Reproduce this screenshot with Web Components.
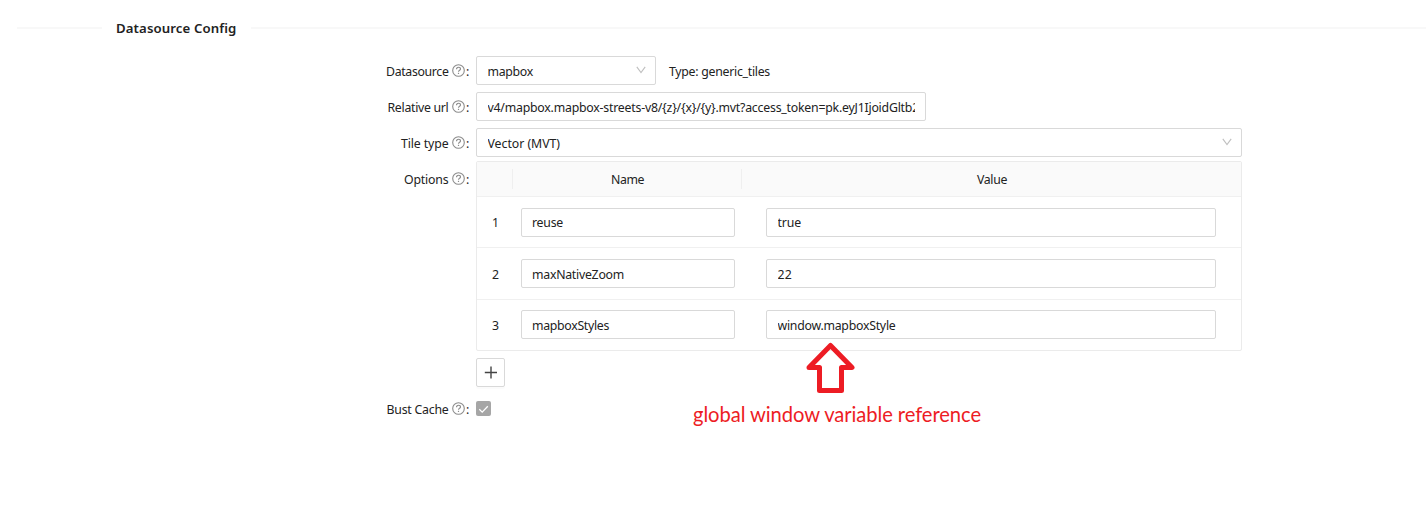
<!DOCTYPE html>
<html lang="en">
<head>
<meta charset="utf-8">
<title>Datasource Config</title>
<style>
html,body{margin:0;background:#fff}
body{height:520px;overflow:hidden;font:12.3px/20px "Noto Sans","Open Sans",sans-serif;color:#222}
</style>
</head>
<body>
<datasource-page></datasource-page>
<script>
const define = (name, css, html, init) => {
  const tpl = document.createElement('template');
  tpl.innerHTML = `<style>*{box-sizing:border-box}${css}</style>${html}`;
  customElements.define(name, class extends HTMLElement {
    connectedCallback() {
      if (this.shadowRoot) return;
      this.attachShadow({mode: 'open'}).append(tpl.content.cloneNode(true));
      if (init) init.call(this, this.shadowRoot);
    }
  });
};

/* Single-line text tracked to an exact advance width (attribute w). */
define('fit-text', ':host{display:inline-block;white-space:pre}span{display:inline-block}', '<span><slot></slot></span>', function (root) {
  const s = root.querySelector('span');
  const w = parseFloat(this.getAttribute('w'));
  const n = this.textContent.length;
  this.style.width = w + 'px';
  s.style.letterSpacing = (w - s.getBoundingClientRect().width) / n + 'px';
});

define('help-icon', ':host{display:block;width:13px;height:13px}svg{display:block}',
  `<svg width="13" height="13" viewBox="0 0 13 13" fill="none" stroke="#8c8c8c"><circle cx="6.5" cy="6.5" r="5.8" stroke-width="1.1"/><path d="M4.5 5.3C4.5 3.9 5.4 3.2 6.5 3.2S8.5 4 8.5 5C8.5 6.3 6.5 6.2 6.5 7.8" stroke-width="1.15"/><path d="M6.5 8.8V10" stroke-width="1.2"/></svg>`);

define('chevron-icon', ':host{display:block;width:10px;height:8px}svg{display:block}',
  `<svg width="10" height="8" viewBox="0 0 10 8" fill="none" stroke="#bfbfbf"><path d="M.8 .8L5 6.5L9.2 .8" stroke-width="1.1"/></svg>`);

define('section-title', `:host{display:flex;align-items:center;height:56px;padding-left:17px;font-weight:600;font-size:13.2px}
  i{height:2px;background:#f8f8f8}.a{width:85px;margin-right:14px}.b{flex:1;margin-left:14px}`,
  '<i class="a"></i><slot></slot><i class="b"></i>');

define('form-row', `:host{display:grid;grid-template-columns:470px 1fr;column-gap:6px;align-items:start}
  .l{display:flex;justify-content:flex-end;align-items:center;height:29px;margin-top:var(--label-offset,0)}
  ::slotted([slot=label]){margin-top:2px}
  help-icon{margin-left:3.5px}b{font-weight:400;width:4px;margin:2px 0 0 1px}.c{display:flex;align-items:center}`,
  '<div class="l"><slot name="label"></slot><help-icon></help-icon><b>:</b></div><div class="c"><slot></slot></div>');

define('text-box', `:host{display:flex;align-items:center;height:29px;border:1px solid #d9d9d9;border-radius:2px;background:#fff;padding:2px 10px 0 10.5px}
  .t{flex:1;min-width:0;overflow:hidden;display:flex}chevron-icon{display:none;flex:none;margin:-3px -1px 0 0}
  :host([select]) chevron-icon{display:block}`,
  '<div class="t"><slot></slot></div><chevron-icon></chevron-icon>');

define('option-row', `:host{display:grid;grid-template-columns:36px 214px 31px 450px;height:51px;align-items:center;border-top:1px solid #f0f0f0}
  :host([index="2"]){height:52px;padding-bottom:1px}
  :host([index="3"]){padding-bottom:1px}
  .n{text-align:center;padding:2px 0 0 1px}
  :host([index="2"]) .n{padding-top:3px}
  :host([index="2"]) ::slotted(*){padding-top:3px}
  ::slotted([slot=name]){margin-left:8px;width:214px;padding-left:10px}::slotted([slot=value]){grid-column:4;margin-left:8px;width:450px}`,
  '<div class="n"></div><slot name="name"></slot><slot name="value"></slot>', function (root) {
    root.querySelector('.n').textContent = this.getAttribute('index');
  });

define('options-table', `:host{display:block;width:766px;height:190px;border:1px solid #ebebeb;border-radius:2px}
  .h{display:grid;grid-template-columns:36px 229px 1fr;height:34px;background:#fafafa;align-items:center;text-align:center}
  .h div{height:20px;border-right:1px solid #efefef;padding:1px 0 0 1px}.h div:last-child{border:0}`,
  `<div class="h"><div></div><div><fit-text w="33">Name</fit-text></div><div><fit-text w="30">Value</fit-text></div></div><slot></slot>`);

define('add-button', ':host{display:flex;align-items:center;justify-content:center;width:29px;height:29px;border:1px solid #d9d9d9;border-radius:2px;box-shadow:0 2px 0 rgba(0,0,0,.016)}svg{display:block}',
  '<svg width="13" height="13" viewBox="0 0 13 13" stroke="#444" stroke-width="1.4"><path d="M7 .5V12.5M.8 6.5H13"/></svg>');

define('check-box', ':host{display:block;width:15px;height:15px;border-radius:2px;background:#a6a6a6}svg{display:block}',
  '<svg width="15" height="15" viewBox="0 0 15 15" fill="none" stroke="#fff" stroke-width="1.3"><path d="M3.3 8.3L6.2 11.1L11.8 5.2"/></svg>');

/* Callout drawn over the form: arrow pointing at the value, with its caption. */
define('red-callout', `:host{position:absolute;left:693px;top:342px;width:288px;color:#ed1c24;font:20.2px/26px Lato,sans-serif}
  svg{display:block;margin-left:112px}fit-text{margin-top:6px}`,
  `<svg width="51" height="53" viewBox="0 0 51 53" fill="none" stroke="#ed1c24" stroke-width="5" stroke-linejoin="round"><path d="M25.5 3.5L47 25.5H36.5V48.5H14.5V25.5H4Z"/></svg><fit-text w="288">global window variable reference</fit-text>`);

define('datasource-page', `:host{display:block;position:relative;height:520px}
  .f{display:flex;flex-direction:column;gap:7px}.s{width:180px}.u{width:450px}.w{width:766px}
  .type{margin:2px 0 0 13px}.opt{margin-top:-3px;--label-offset:3px}.add{padding-left:476px}.cache{height:29px}
  .cache check-box{margin-top:7px}`,
  `<section-title><fit-text w="120.5">Datasource Config</fit-text></section-title>
  <div class="f">
    <form-row><fit-text slot="label" w="62.5">Datasource</fit-text><text-box class="s" select><fit-text w="45.5">mapbox</fit-text></text-box><fit-text class="type" w="101">Type: generic_tiles</fit-text></form-row>
    <form-row><fit-text slot="label" w="61">Relative url</fit-text><text-box class="u"><fit-text w="431.5">v4/mapbox.mapbox-streets-v8/{z}/{x}/{y}.mvt?access_token=pk.eyJ1IjoidGltb2</fit-text></text-box></form-row>
    <form-row><fit-text slot="label" w="47.5">Tile type</fit-text><text-box class="w" select><fit-text w="72.5">Vector (MVT)</fit-text></text-box></form-row>
    <form-row class="opt"><fit-text slot="label" w="44.5">Options</fit-text>
      <options-table>
        <option-row index="1"><text-box slot="name"><fit-text w="31">reuse</fit-text></text-box><text-box slot="value"><fit-text w="23.5">true</fit-text></text-box></option-row>
        <option-row index="2"><text-box slot="name"><fit-text w="92">maxNativeZoom</fit-text></text-box><text-box slot="value"><fit-text w="14.5">22</fit-text></text-box></option-row>
        <option-row index="3"><text-box slot="name"><fit-text w="77">mapboxStyles</fit-text></text-box><text-box slot="value"><fit-text w="118">window.mapboxStyle</fit-text></text-box></option-row>
      </options-table>
    </form-row>
    <div class="add"><add-button></add-button></div>
    <form-row class="cache"><fit-text slot="label" w="62">Bust Cache</fit-text><check-box></check-box></form-row>
  </div>
  <red-callout></red-callout>`);
</script>
</body>
</html>
